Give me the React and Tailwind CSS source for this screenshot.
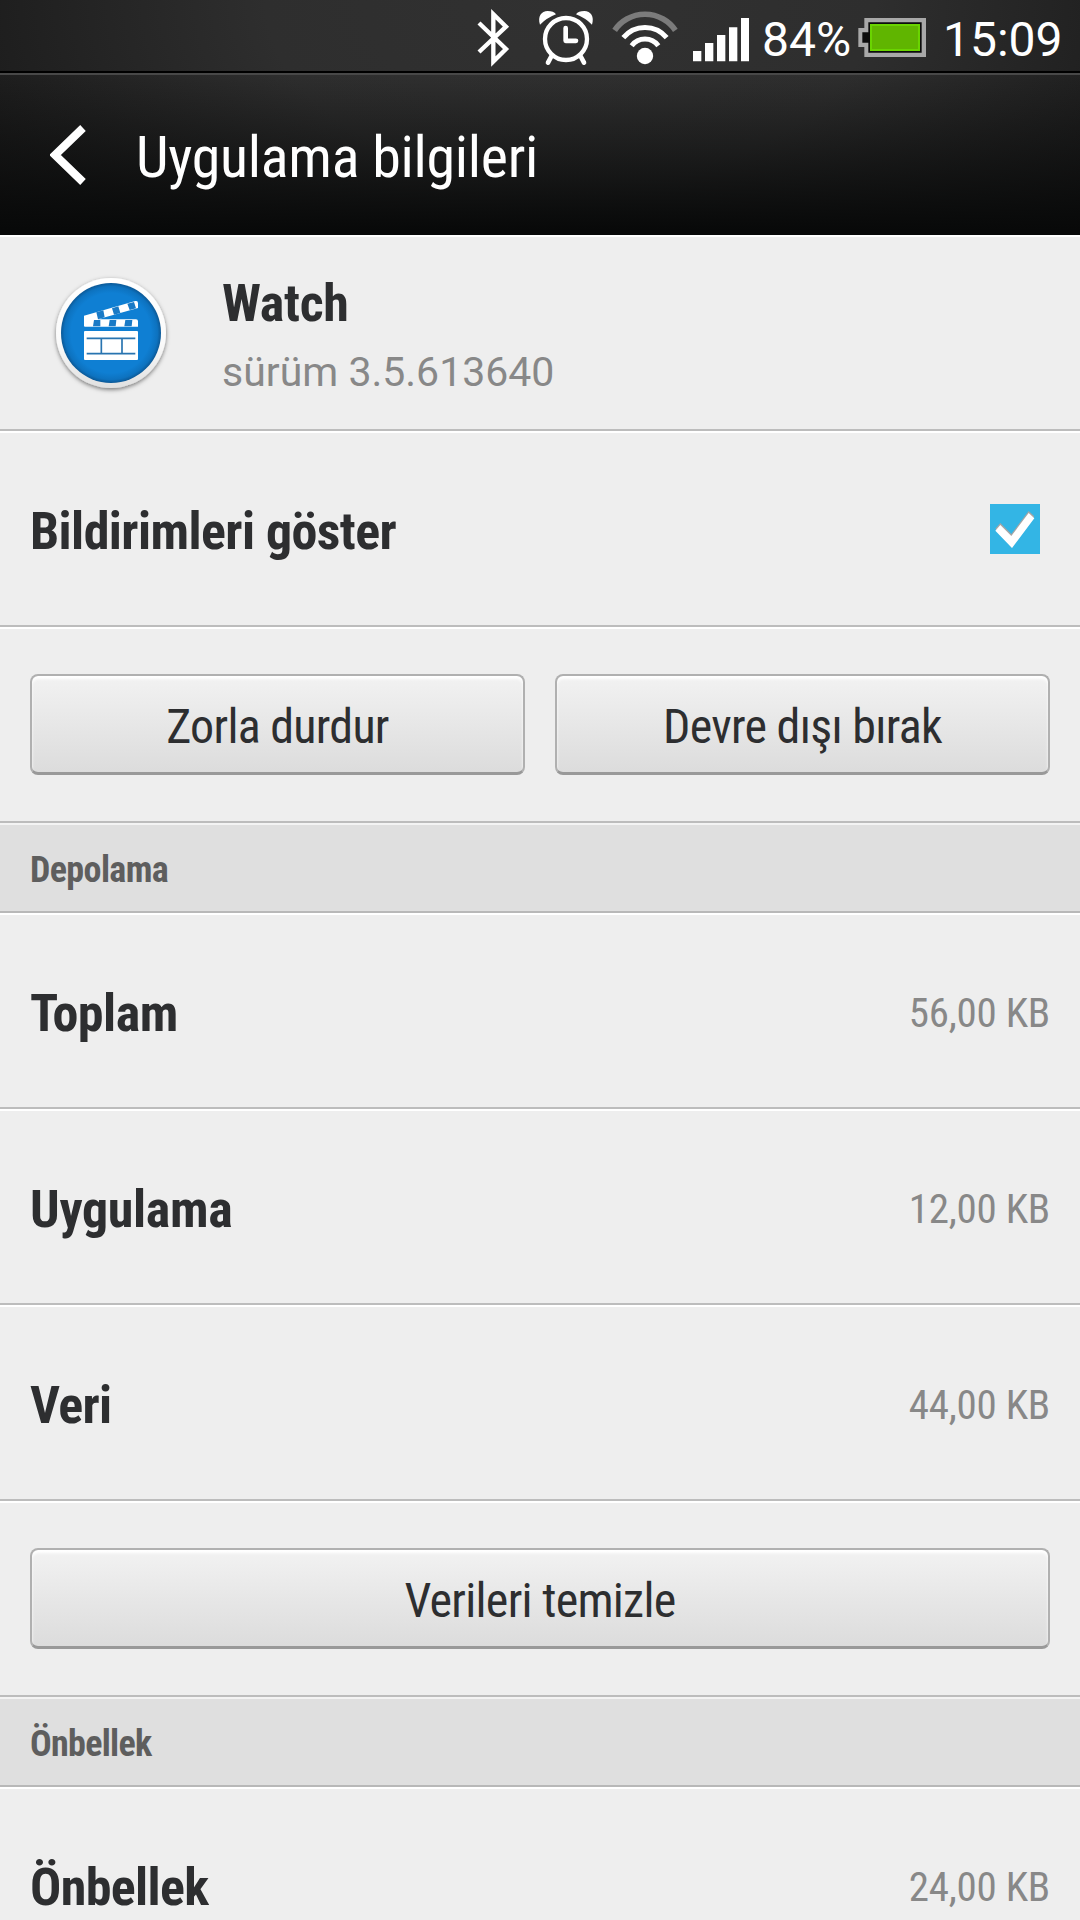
import React from "react";

const storage = [
  { label: "Toplam", value: "56,00 KB", spacing: "tracking-[-0.5px]" },
  { label: "Uygulama", value: "12,00 KB", spacing: "tracking-[-0.3px]" },
  { label: "Veri", value: "44,00 KB", spacing: "tracking-[-0.7px]" },
];

function StatusBar() {
  return (
    <div className="h-[71px] flex items-center justify-end text-[48px] leading-none text-white">
      <svg className="w-[33px] h-[71px]" viewBox="51 0 99 213" fill="none">
        <path d="M57 69L138 147L100 184.500V42.500L138 80L57 156" stroke="#fff" strokeWidth="13" />
      </svg>

      <svg className="w-[58px] h-[71px] ml-[27px]" viewBox="231 0 174 213" fill="none">
        <circle cx="318" cy="117" r="63" stroke="#fff" strokeWidth="13" />
        <path d="M317 84V122.500H348" stroke="#fff" strokeWidth="14" strokeLinecap="round" strokeLinejoin="round" />
        <path d="M273 171L264 188M363 171L372 188" stroke="#fff" strokeWidth="14" strokeLinecap="round" />
        <path d="M240 74C232 49 244 33 263 33C275 33 283 36 288 43Q260 54 240 74ZM396 74C404 49 392 33 373 33C361 33 353 36 348 43Q376 54 396 74Z" fill="#fff" />
      </svg>

      <svg className="w-[66px] h-[71px] ml-[17px]" viewBox="456 0 198 213" fill="none">
        <path d="M464 91A110 110 0 0 1 646 91" stroke="#7b7b7b" strokeWidth="17" />
        <path d="M490 113A84 84 0 0 1 620 113" stroke="#fff" strokeWidth="15" />
        <path d="M515 137A50 50 0 0 1 595 137" stroke="#fff" strokeWidth="15" />
        <circle cx="555" cy="168" r="24.500" fill="#fff" />
      </svg>

      <svg className="w-[58px] h-[71px] ml-[14px]" viewBox="696 0 174 213" fill="#fff">
        <path d="M699 153h25v31h-25zM735 129h25v55h-25zM771 105h25v79h-25zM807 82h25v102h-25zM843 54h24v130h-24z" />
      </svg>

      <span className="ml-3 w-[96px] pt-2">84%</span>

      <svg className="w-[69px] h-[71px]" viewBox="324 0 207 213">
        <path d="M343 54H528V171H343V141H325V84H343Z" fill="#a8a8a8" />
        <path d="M355 67H515V158H355V128H337V97H355Z" fill="#0c0c0c" />
        <path d="M360 72H510V153H360Z" fill="#6ad400" />
        <path d="M366 78H504V147H366Z" fill="#60b500" />
      </svg>

      <span className="ml-4 w-[137px] pt-2">15:09</span>
    </div>
  );
}

function AppIcon() {
  return (
    <svg className="w-[160px] h-[150px] mt-1" viewBox="0 0 480 450">
      <defs>
        <linearGradient id="rim" x1="0" y1="0" x2="0" y2="1">
          <stop offset="0" stopColor="#fff" />
          <stop offset="0.6" stopColor="#fafafa" />
          <stop offset="1" stopColor="#e0e0e0" />
        </linearGradient>
        <radialGradient id="disc" cx="0.5" cy="0.5" r="0.5">
          <stop offset="0.8" stopColor="#0f7fd3" />
          <stop offset="0.93" stopColor="#0d72bf" />
          <stop offset="1" stopColor="#0b5896" />
        </radialGradient>
        <filter id="shadow" x="-20%" y="-20%" width="140%" height="140%">
          <feDropShadow dx="0" dy="5" stdDeviation="6" floodColor="#000" floodOpacity="0.5" />
        </filter>
      </defs>
      <circle cx="243" cy="219" r="165" fill="url(#rim)" filter="url(#shadow)" />
      <circle cx="243" cy="219" r="150" fill="url(#disc)" />
      <g fill="#fff">
        <path d="M165 213H321Q324 213 324 216V297Q324 300 321 300H165Q162 300 162 297V216Q162 213 165 213Z" />
        <path d="M162 167L316 123Q324 121 324 130V144L204 178H318Q324 178 324 184V200H165Q162 200 162 197Z" />
      </g>
      <g fill="#1a7ac6">
        <path d="M199 157L220 151L224 172L204 178ZM246 145L265 139L271 159L252 164ZM292 131L312 126L318 145L299 150Z" />
        <path d="M192 180H211V199H189ZM239 180H259L257 199H236ZM286 180H307L305 199H283Z" />
      </g>
      <path d="M170 235H316M170 281H316M214 235V281M276 235V281" stroke="#2874b0" strokeWidth="5" />
    </svg>
  );
}

function Row({ children, className = "" }) {
  return (
    <div className={`h-[196px] shrink-0 flex items-center border-t-2 border-t-white border-b-2 border-b-[#bcbcbc] px-[30px] ${className}`}>
      {children}
    </div>
  );
}

function Section({ title, className }) {
  return (
    <div className={`h-[90px] shrink-0 flex items-center bg-[#dfdfdf] border-t-2 border-t-[#f3f3f3] border-b-2 border-b-[#b8b8b8] px-[30px] pt-1 font-bold text-[36px] text-[#5e5e5e] ${className}`}>
      {title}
    </div>
  );
}

function Label({ children, className = "" }) {
  return <span className={`font-bold text-[52px] leading-none text-[#2d2e30] ${className}`}>{children}</span>;
}

function Value({ children }) {
  return <span className="ml-auto pt-1 text-[41px] leading-none tracking-[-0.25px] text-[#888]">{children}</span>;
}

function Button({ children }) {
  return (
    <button className="flex-1 h-[101px] mb-px pt-[5px] rounded-[8px] border-2 border-[#b0b0b0] border-b-[3px] border-b-[#999] bg-linear-to-b from-[#f2f2f2] to-[#dcdcdc] shadow-[inset_0_3px_3px_#fff] text-[48px] leading-none tracking-[-0.72px] text-[#2d2e30]">
      {children}
    </button>
  );
}

function App() {
  return (
    <div className="w-[1080px] h-[1920px] overflow-hidden flex flex-col bg-[#eee] font-['Roboto_Condensed',Roboto,sans-serif] [font-stretch:75%]">
      {/* ===== STATUS + TITLE ===== */}
      <div className="h-[235px] shrink-0 bg-[linear-gradient(to_bottom,transparent_32%,#080909_98%),radial-gradient(ellipse_760px_460px_at_570px_0px,#313131,#2e2e2e_40%,#141414_100%)]">
        <div className="font-[Roboto,sans-serif] [font-stretch:normal]">
          <StatusBar />
        </div>
        <div className="h-[164px] flex items-center border-t-2 border-t-black">
          <div className="w-full h-full flex items-center border-t-2 border-t-[#484848]">
            <svg className="w-[36px] h-[60px] ml-[50px]" viewBox="0 0 36 60" fill="none">
              <path d="M33 3L5 30L33 57" stroke="#fff" strokeWidth="8" />
            </svg>
            <h1 className="ml-[50px] pt-1 text-[58px] leading-none tracking-[-0.3px] text-white">Uygulama bilgileri</h1>
          </div>
        </div>
      </div>

      {/* ===== APP ===== */}
      <Row>
        <AppIcon />
        <div className="flex flex-col gap-[22px] ml-[32px] pt-[5px]">
          <Label className="tracking-[-0.3px]">Watch</Label>
          <span className="font-[Roboto,sans-serif] [font-stretch:normal] text-[41px] leading-none text-[#888]">sürüm 3.5.613640</span>
        </div>
      </Row>

      <Row className="pr-[40px]">
        <Label className="pt-1.5 tracking-[-0.58px]">Bildirimleri göster</Label>
        <svg className="ml-auto w-[50px] h-[50px] bg-[#33b5e5]" viewBox="0 0 150 150">
          <path d="M16 74L31 57L64 90L116 21L133 37L66 131Z" fill="#a5a5a5" />
          <path d="M16 80L31 63L64 96L116 27L133 43L66 132Z" fill="#fff" />
        </svg>
      </Row>

      <Row className="gap-[30px]">
        <Button>Zorla durdur</Button>
        <Button>Devre dışı bırak</Button>
      </Row>

      {/* ===== STORAGE ===== */}
      <Section title="Depolama" className="tracking-[-0.6px]" />
      {storage.map((item) => (
        <Row key={item.label}>
          <Label className={`pt-1.5 ${item.spacing}`}>{item.label}</Label>
          <Value>{item.value}</Value>
        </Row>
      ))}
      <Row>
        <Button>Verileri temizle</Button>
      </Row>

      {/* ===== CACHE ===== */}
      <Section title="Önbellek" className="tracking-[-0.7px]" />
      <Row>
        <Label className="pt-1.5 tracking-[-0.65px]">Önbellek</Label>
        <Value>24,00 KB</Value>
      </Row>
    </div>
  );
}

export default App;
